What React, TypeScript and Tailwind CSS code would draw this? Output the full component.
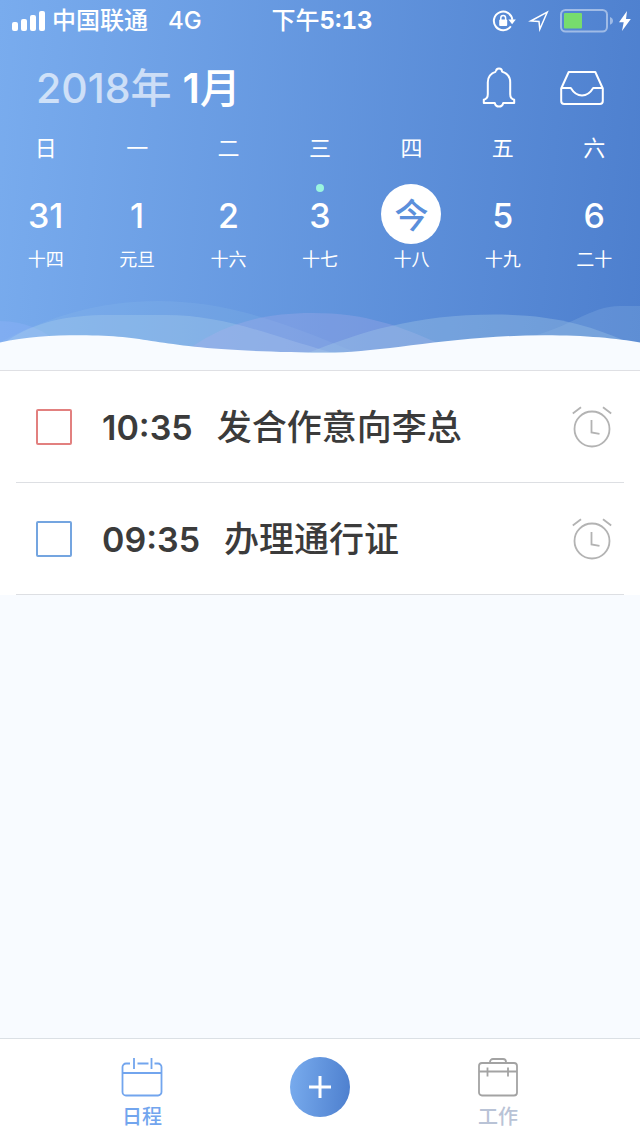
import { useState } from "react";

const weekdays = ["日", "一", "二", "三", "四", "五", "六"];

const days = [
  { label: "31", lunar: "十四" },
  { label: "1", lunar: "元旦" },
  { label: "2", lunar: "十六" },
  { label: "3", lunar: "十七", marked: true },
  { label: "今", lunar: "十八", today: true },
  { label: "5", lunar: "十九" },
  { label: "6", lunar: "二十" },
];

const tasks = [
  { id: "task-1", time: "10:35", title: "发合作意向李总", border: "border-[#e2807f]" },
  { id: "task-2", time: "09:35", title: "办理通行证", border: "border-[#74a5e0]" },
];

function StatusBar() {
  return (
    <div className="grid h-10 grid-cols-[1fr_auto_1fr] items-center pr-2 pl-3 text-2xl font-medium">
      <div className="flex items-center pt-0.5">
        <svg width="34" height="20" viewBox="0 0 34 20" fill="currentColor" aria-hidden="true">
          <rect x="0" y="11" width="6" height="9" rx="2" />
          <rect x="9" y="8" width="6" height="12" rx="2" />
          <rect x="18" y="4" width="6" height="16" rx="2" />
          <rect x="27" y="0" width="6" height="20" rx="2" />
        </svg>
        <span className="ml-1.5">中国联通</span>
        <span className="ml-5">4G</span>
      </div>
      <div className="pt-0.5">
        下午<span className="font-bold tabular-nums">5:13</span>
      </div>
      <div className="flex items-center justify-end pt-0.5">
        <svg width="24" height="24" viewBox="0 0 24 24" fill="none" stroke="currentColor" strokeWidth="2" aria-hidden="true">
          <path d="M18.800 17.200A9.300 9.300 0 1 1 20.400 10.800" />
          <path d="M16.400 10.500h7.400l-3.700 4.700z" fill="currentColor" stroke="none" />
          <rect x="7.200" y="10.500" width="8" height="6.500" rx="1" fill="currentColor" stroke="none" />
          <path d="M8.800 11V9a2.400 2.400 0 0 1 4.800 0v2" strokeWidth="1.500" />
        </svg>
        <svg className="ml-3" width="22" height="22" viewBox="0 0 22 22" fill="none" stroke="currentColor" strokeWidth="1.500" strokeLinejoin="miter" aria-hidden="true">
          <path d="M19.200 2.200 2.800 11l8.200.4.8 7.800z" />
        </svg>
        <svg className="ml-2.5" width="54" height="24" viewBox="0 0 54 24" fill="none" aria-hidden="true">
          <rect x="1" y="1" width="46" height="21.500" rx="4.500" stroke="#fff" strokeOpacity=".45" strokeWidth="2" />
          <rect x="4" y="4" width="18" height="15.500" rx="1" fill="#77dc6d" />
          <path d="M50 8c4 1.200 4 6.500 0 7.700z" fill="#fff" fillOpacity=".45" />
        </svg>
        <svg className="ml-1" width="14" height="22" viewBox="0 0 14 22" fill="currentColor" aria-hidden="true">
          <path d="M9 1 1 12.300h4.700L4 21l8.800-12H8z" />
        </svg>
      </div>
    </div>
  );
}

function BellIcon() {
  return (
    <svg width="34" height="42" viewBox="0 0 34 42" fill="none" stroke="currentColor" strokeWidth="2" strokeLinejoin="round" aria-hidden="true">
      <path d="M14 4.600a3 3 0 0 1 6 0C25.500 6.300 28.200 10.300 28.200 15.300v12c0 3 1.500 4.800 4 5.500v3.200h-11c-.5 2.500-2.200 3.600-4.200 3.600s-3.700-1.100-4.200-3.600h-11v-3.200c2.500-.7 4-2.500 4-5.500v-12c0-5 2.700-9 8.200-10.700" />
    </svg>
  );
}

function TrayIcon() {
  return (
    <svg width="44" height="36" viewBox="0 0 44 36" fill="none" stroke="currentColor" strokeWidth="2" strokeLinejoin="round" aria-hidden="true">
      <path d="M1.200 18.500 8.700 2h26.600l7.500 16.500V31a3 3 0 0 1-3 3H4.200a3 3 0 0 1-3-3z" />
      <path d="M1.200 18h9.600C13.500 22.500 17 25.500 22 25.500S30.500 22.500 33.200 18h9.600" />
    </svg>
  );
}

function AlarmIcon() {
  return (
    <svg width="40" height="42" viewBox="0 0 40 42" fill="none" stroke="#b3b3b3" strokeWidth="1.800" aria-hidden="true">
      <circle cx="20" cy="23" r="17.500" />
      <path d="M19.500 14v12.500l8 1.300" />
      <path d="M.8 7.500 9 1.200M31 1.200l8.200 6.300" />
    </svg>
  );
}

function Waves() {
  return (
    <svg className="block h-[74px] w-full" viewBox="0 296 640 74" preserveAspectRatio="none" aria-hidden="true">
      <path d="M0 342C50 316 100 301 158 301S270 316 350 350V370H0z" fill="#a6d2f2" fillOpacity=".13" />
      <path d="M0 321C25 321 45 330 60 345H0z" fill="#9cb9ff" fillOpacity=".25" />
      <path d="M5 342C35 322 65 315 110 315H165C225 315 265 334 330 352H5z" fill="#aed0ee" fillOpacity=".33" />
      <path d="M190 348C222 326 258 313 312 313S400 326 442 345V352H190z" fill="#b3b0ee" fillOpacity=".28" />
      <path d="M308 353C360 332 415 314.500 495 314.500C555 314.500 592 326 632 344V353z" fill="#a5cbe9" fillOpacity=".35" />
      <path d="M525 338C570 328 590 306 620 306H640V345H525z" fill="#94bde8" fillOpacity=".25" />
      <path
        d="M0 342.500C25 337 52 335.300 80 335.300C165 335.300 150 352 335 352.500C385 352 455 335.300 545 335.300C585 335.300 618 338.500 640 342.500V371H0z"
        fill="#f8fbff"
      />
    </svg>
  );
}

function CalendarHeader() {
  return (
    <header className="border-b border-[#dfe0e4] bg-[#f8fbff] text-white">
      <div className="bg-linear-[95deg,#79acee,#4d7fce]">
        <StatusBar />
        <div className="flex h-24 items-center justify-between px-9">
          <h1 className="pt-0.5 text-[41px] font-medium">
            <span className="text-white/65">2018年</span> <span className="font-semibold">1</span>月
          </h1>
          <div className="flex items-center gap-11">
            <button type="button" aria-label="提醒">
              <BellIcon />
            </button>
            <button type="button" aria-label="收件箱">
              <TrayIcon />
            </button>
          </div>
        </div>
        <div className="grid grid-cols-7 text-center text-[22px] leading-6">
          {weekdays.map((name) => (
            <span key={name}>{name}</span>
          ))}
        </div>
        <div className="mt-6 mb-6 grid grid-cols-7">
          {days.map((day) => (
            <button key={day.label} type="button" className="flex flex-col items-center gap-1">
              <span
                className={
                  day.today
                    ? "flex size-15 items-center justify-center rounded-full bg-white pt-0.5 text-[34px] font-medium text-[#5b8fdb]"
                    : "relative flex size-15 items-center justify-center pt-0.5 text-[34px] font-medium"
                }
              >
                {day.marked && <span className="absolute top-0 left-1/2 size-2 -translate-x-1/2 rounded-full bg-[#9af5df]" />}
                {day.label}
              </span>
              <span className="text-lg leading-6">{day.lunar}</span>
            </button>
          ))}
        </div>
        <Waves />
      </div>
    </header>
  );
}

function TaskList() {
  const [done, setDone] = useState<Record<string, boolean>>({});
  return (
    <ul className="bg-white">
      {tasks.map((task) => (
        <li key={task.id} className="mx-4 flex h-28 items-center border-b border-[#dddfe3] pr-3 pl-5">
          <input
            id={task.id}
            type="checkbox"
            checked={!!done[task.id]}
            onChange={() => setDone({ ...done, [task.id]: !done[task.id] })}
            className={`size-9 shrink-0 appearance-none rounded-xs border-2 checked:bg-gray-200 ${task.border}`}
          />
          <label htmlFor={task.id} className="ml-7.5 flex flex-1 items-baseline gap-6 pt-0.5 font-medium text-[#3b3b3b]">
            <span className="text-[34px] font-semibold">{task.time}</span>
            <span className="text-[35px]">{task.title}</span>
          </label>
          <button type="button" aria-label="闹钟">
            <AlarmIcon />
          </button>
        </li>
      ))}
    </ul>
  );
}

function TabBar() {
  return (
    <nav className="grid h-[98px] grid-cols-3 border-t border-[#dbe0e5] bg-white px-[53px] text-xl font-medium">
      <a href="#schedule" className="flex flex-col items-center pt-4.5 text-[#72a5ee]">
        <svg width="42" height="42" viewBox="0 0 42 42" fill="none" stroke="currentColor" strokeWidth="1.800" aria-hidden="true">
          <path d="M9 6.500H5a3.500 3.500 0 0 0-3.500 3.500v25A3.500 3.500 0 0 0 5 38.500h32a3.500 3.500 0 0 0 3.500-3.500V10A3.500 3.500 0 0 0 37 6.500h-3.500M16.500 6.500h11M1.500 16h39" />
          <path d="M13 1v11M30.500 1v11" />
        </svg>
        <span className="leading-9">日程</span>
      </a>
      <div className="flex justify-center pt-4.5">
        <button
          type="button"
          aria-label="新建"
          className="flex size-15 items-center justify-center rounded-full bg-linear-[95deg,#79acee,#4d7fce] text-white"
        >
          <svg width="24" height="24" viewBox="0 0 24 24" fill="none" stroke="currentColor" strokeWidth="3" aria-hidden="true">
            <path d="M12 1v22M1 12h22" />
          </svg>
        </button>
      </div>
      <a href="#work" className="flex flex-col items-center pt-4.5 text-[#b9c3d6]">
        <svg width="42" height="42" viewBox="0 0 42 42" fill="none" stroke="#a3a3a3" strokeWidth="1.800" aria-hidden="true">
          <rect x="2" y="6" width="38" height="32.500" rx="3" />
          <path d="M13 6V5a3 3 0 0 1 3-3h10a3 3 0 0 1 3 3v1M2 14.500h38M10.500 10.500v9M31 10.500v9" />
        </svg>
        <span className="leading-9">工作</span>
      </a>
    </nav>
  );
}

export default function App() {
  return (
    <div className="flex min-h-screen flex-col bg-[#f8fbff] font-[Inter,'Noto_Sans_CJK_SC',sans-serif]">
      <CalendarHeader />
      <main className="flex-1">
        <TaskList />
      </main>
      <TabBar />
    </div>
  );
}
